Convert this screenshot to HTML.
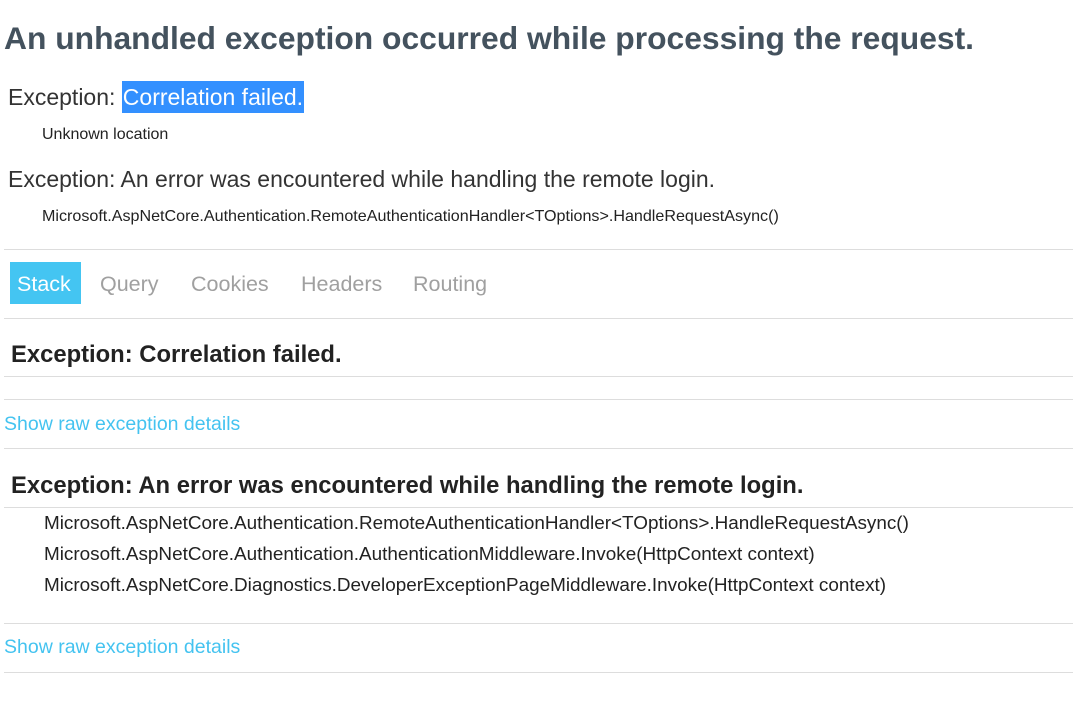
<!DOCTYPE html>
<html><head><meta charset="utf-8"><style>
body{margin:0;width:1073px;height:712px;background:#fff;font-family:"Liberation Sans",sans-serif;position:relative;overflow:hidden}
.a{position:absolute;white-space:nowrap}
.hr{position:absolute;left:4px;right:0;height:1px;background:#ddd}
.t{color:#a0a0a0;font-size:21.5px;top:271px}
.sl{left:44px;font-size:18.9px;color:#222;line-height:22px}
.lk{left:4px;font-size:19.5px;color:#44c3f0;line-height:22px}
.h3{left:11px;font-weight:bold;font-size:23.8px;color:#222;line-height:26px}
</style></head><body>
<div class="a" style="left:4px;top:20px;font-size:31.8px;font-weight:bold;color:#44525e;line-height:36px">An unhandled exception occurred while processing the request.</div>
<div class="a" style="left:8px;top:84px;font-size:23px;line-height:26px;color:#333">Exception: <span style="background:#3390ff;color:#fff;padding:3px 1px">Correlation failed.</span></div>
<div class="a" style="left:42px;top:126px;font-size:16px;line-height:18px;color:#222">Unknown location</div>
<div class="a" style="left:8px;top:166px;font-size:23px;line-height:26px;color:#333">Exception: An error was encountered while handling the remote login.</div>
<div class="a" style="left:42px;top:207px;font-size:16.1px;line-height:18px;color:#222">Microsoft.AspNetCore.Authentication.RemoteAuthenticationHandler&lt;TOptions&gt;.HandleRequestAsync()</div>
<div class="hr" style="top:249px"></div>
<div class="a" style="left:10px;top:262px;width:71px;height:42px;background:#44c5f2"></div>
<div class="a t" style="left:17px;color:#fff;line-height:26px">Stack</div>
<div class="a t" style="left:100px;line-height:26px">Query</div>
<div class="a t" style="left:191px;line-height:26px">Cookies</div>
<div class="a t" style="left:301px;line-height:26px">Headers</div>
<div class="a t" style="left:413px;line-height:26px">Routing</div>
<div class="hr" style="top:318px"></div>
<div class="a h3" style="top:342px">Exception: Correlation failed.</div>
<div class="hr" style="top:376px"></div>
<div class="hr" style="top:399px"></div>
<div class="a lk" style="top:413px">Show raw exception details</div>
<div class="hr" style="top:448px"></div>
<div class="a h3" style="top:473px">Exception: An error was encountered while handling the remote login.</div>
<div class="hr" style="top:507px"></div>
<div class="a sl" style="top:513px">Microsoft.AspNetCore.Authentication.RemoteAuthenticationHandler&lt;TOptions&gt;.HandleRequestAsync()</div>
<div class="a sl" style="top:544px">Microsoft.AspNetCore.Authentication.AuthenticationMiddleware.Invoke(HttpContext context)</div>
<div class="a sl" style="top:575px">Microsoft.AspNetCore.Diagnostics.DeveloperExceptionPageMiddleware.Invoke(HttpContext context)</div>
<div class="hr" style="top:623px"></div>
<div class="a lk" style="top:636px">Show raw exception details</div>
<div class="hr" style="top:672px"></div>
</body></html>
